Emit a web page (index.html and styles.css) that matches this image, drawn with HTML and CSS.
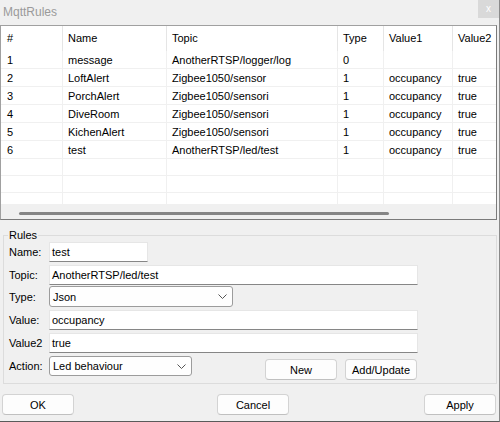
FILE: index.html
```html
<!DOCTYPE html>
<html>
<head>
<meta charset="utf-8">
<link rel="stylesheet" href="styles.css">
</head>
<body>
<div class="window">
  <div class="titlebar">
    <span class="title">MqttRules</span>
    <span class="close">x</span>
  </div>

  <div class="list">
    <div class="grid">
      <table>
        <colgroup>
          <col class="c-num"><col class="c-name"><col class="c-topic"><col class="c-type"><col class="c-v1"><col class="c-v2">
        </colgroup>
        <thead>
          <tr><th>#</th><th>Name</th><th>Topic</th><th>Type</th><th>Value1</th><th>Value2</th></tr>
        </thead>
        <tbody>
          <tr><td>1</td><td>message</td><td>AnotherRTSP/logger/log</td><td>0</td><td></td><td></td></tr>
          <tr><td>2</td><td>LoftAlert</td><td>Zigbee1050/sensor</td><td>1</td><td>occupancy</td><td>true</td></tr>
          <tr><td>3</td><td>PorchAlert</td><td>Zigbee1050/sensori</td><td>1</td><td>occupancy</td><td>true</td></tr>
          <tr><td>4</td><td>DiveRoom</td><td>Zigbee1050/sensori</td><td>1</td><td>occupancy</td><td>true</td></tr>
          <tr><td>5</td><td>KichenAlert</td><td>Zigbee1050/sensori</td><td>1</td><td>occupancy</td><td>true</td></tr>
          <tr><td>6</td><td>test</td><td>AnotherRTSP/led/test</td><td>1</td><td>occupancy</td><td>true</td></tr>
          <tr><td></td><td></td><td></td><td></td><td></td><td></td></tr>
          <tr><td></td><td></td><td></td><td></td><td></td><td></td></tr>
          <tr><td></td><td></td><td></td><td></td><td></td><td></td></tr>
        </tbody>
      </table>
    </div>
    <div class="hscroll"><div class="thumb"></div></div>
  </div>

  <fieldset class="rules">
    <legend>Rules</legend>
    <div class="row r-name">
      <label>Name:</label>
      <div class="field w-name">test</div>
    </div>
    <div class="row r-topic">
      <label>Topic:</label>
      <div class="field w-long">AnotherRTSP/led/test</div>
    </div>
    <div class="row r-type">
      <label>Type:</label>
      <div class="select w-type"><span>Json</span>
        <svg class="chev" width="9" height="5" viewBox="0 0 9 5"><path d="M0.5 0.5 L4.5 4.5 L8.5 0.5" fill="none" stroke="#555" stroke-width="1"/></svg>
      </div>
    </div>
    <div class="row r-value">
      <label>Value:</label>
      <div class="field w-long">occupancy</div>
    </div>
    <div class="row r-value2">
      <label>Value2</label>
      <div class="field w-long">true</div>
    </div>
    <div class="row r-action">
      <label>Action:</label>
      <div class="select w-action"><span>Led behaviour</span>
        <svg class="chev" width="9" height="5" viewBox="0 0 9 5"><path d="M0.5 0.5 L4.5 4.5 L8.5 0.5" fill="none" stroke="#555" stroke-width="1"/></svg>
      </div>
      <button class="btn b-new">New</button>
      <button class="btn b-add">Add/Update</button>
    </div>
  </fieldset>

  <div class="footer">
    <button class="btn b-ok">OK</button>
    <button class="btn b-cancel">Cancel</button>
    <button class="btn b-apply">Apply</button>
  </div>
</div>
</body>
</html>
```

FILE: styles.css
```css
* { box-sizing: border-box; }

body {
  margin: 0;
  background: #f0f0f0;
  font-family: "Liberation Sans", Arial, sans-serif;
  font-size: 11px;
  color: #000;
}

.window {
  width: 500px;
  height: 422px;
  display: flex;
  flex-direction: column;
  border-right: 1px solid #8a8a8a;
  border-bottom: 1px solid #5a5a5a;
  overflow: hidden;
}

/* title bar */
.titlebar {
  height: 25px;
  flex: none;
  display: flex;
  justify-content: space-between;
  align-items: flex-start;
}
.title {
  margin: 5px 0 0 3px;
  font-size: 12px;
  line-height: 14px;
  color: #9a9a9a;
}
.close {
  width: 21px;
  height: 18px;
  background: #d9d9d9;
  color: #fff;
  font-size: 10px;
  line-height: 17px;
  text-align: center;
}

/* list view */
.list {
  width: 497px;
  height: 195px;
  flex: none;
  background: #fff;
  border: 1px solid #a0a0a0;
  border-right-color: #7a7a7a;
  border-bottom-color: #7a7a7a;
  display: flex;
  flex-direction: column;
}
.grid {
  height: 178px;
  overflow: hidden;
  flex: none;
}
table {
  border-collapse: separate;
  border-spacing: 0;
  table-layout: fixed;
  width: 511px;
}
.c-num { width: 62px; }
.c-name { width: 104px; }
.c-topic { width: 171px; }
.c-type { width: 46px; }
.c-v1 { width: 69px; }
.c-v2 { width: 59px; }

th, td {
  text-align: left;
  font-weight: normal;
  white-space: nowrap;
  overflow: hidden;
  padding-left: 5px;
  border-right: 1px solid #f0f0f0;
}
th:first-child, td:first-child { padding-left: 6px; }
th {
  height: 25px;
  padding-top: 1px;
  line-height: 23px;
  border-right-color: #e5e5e5;
}
tbody tr { height: 17px; }
td {
  height: 17px;
  padding-top: 2px;
  line-height: 14px;
  border-bottom: 1px solid #f0f0f0;
}

.hscroll {
  height: 15px;
  flex: none;
  background: #f0f0f0;
}
.thumb {
  margin: 8px 0 0 18px;
  width: 370px;
  height: 3px;
  border-radius: 2px;
  background: #858585;
}

/* rules group */
.rules {
  margin: 9px 2px 0 3px;
  padding: 0 0 3px 5px;
  border: 1px solid #dcdcdc;
  min-width: 0;
}
.rules legend {
  padding: 0 1px;
  margin-left: -1px;
  line-height: 13px;
  font-size: 11px;
}

.row {
  display: flex;
  align-items: center;
  height: 20px;
}
.row label {
  width: 40px;
  flex: none;
}
.r-topic { margin-top: 3px; }
.r-type { margin-top: 1px; height: 21px; }
.r-value { margin-top: 3px; }
.r-value2 { margin-top: 3px; }
.r-action { margin-top: 3px; height: 24px; align-items: flex-start; }
.r-action label { line-height: 20px; }

.field {
  height: 20px;
  background: #fff;
  border: 1px solid #e6e6e6;
  border-bottom-color: #868686;
  padding-left: 2px;
  line-height: 18px;
  white-space: nowrap;
}
.w-name { width: 99px; }
.w-long { width: 369px; }

.select {
  height: 21px;
  background: #fefefe;
  border: 1px solid #9c9c9c;
  border-radius: 3px;
  display: flex;
  align-items: center;
  justify-content: space-between;
  padding: 0 5px 0 3px;
}
.w-type { width: 184px; }
.w-action { width: 143px; height: 20px; }
.chev { flex: none; }

.btn {
  font-family: "Liberation Sans", Arial, sans-serif;
  font-size: 11px;
  color: #000;
  width: 72px;
  height: 21px;
  padding: 0;
  background: #fdfdfd;
  border: 1px solid #d3d3d3;
  border-bottom-color: #c0c0c0;
  border-radius: 4px;
  flex: none;
}
.b-new { margin: 3px 0 0 73px; }
.b-add { margin: 3px 0 0 8px; }

.footer {
  display: flex;
  margin-top: 10px;
  padding: 0 3px 0 2px;
}
.b-cancel { margin-left: 143px; }
.b-apply { margin-left: auto; }
```
